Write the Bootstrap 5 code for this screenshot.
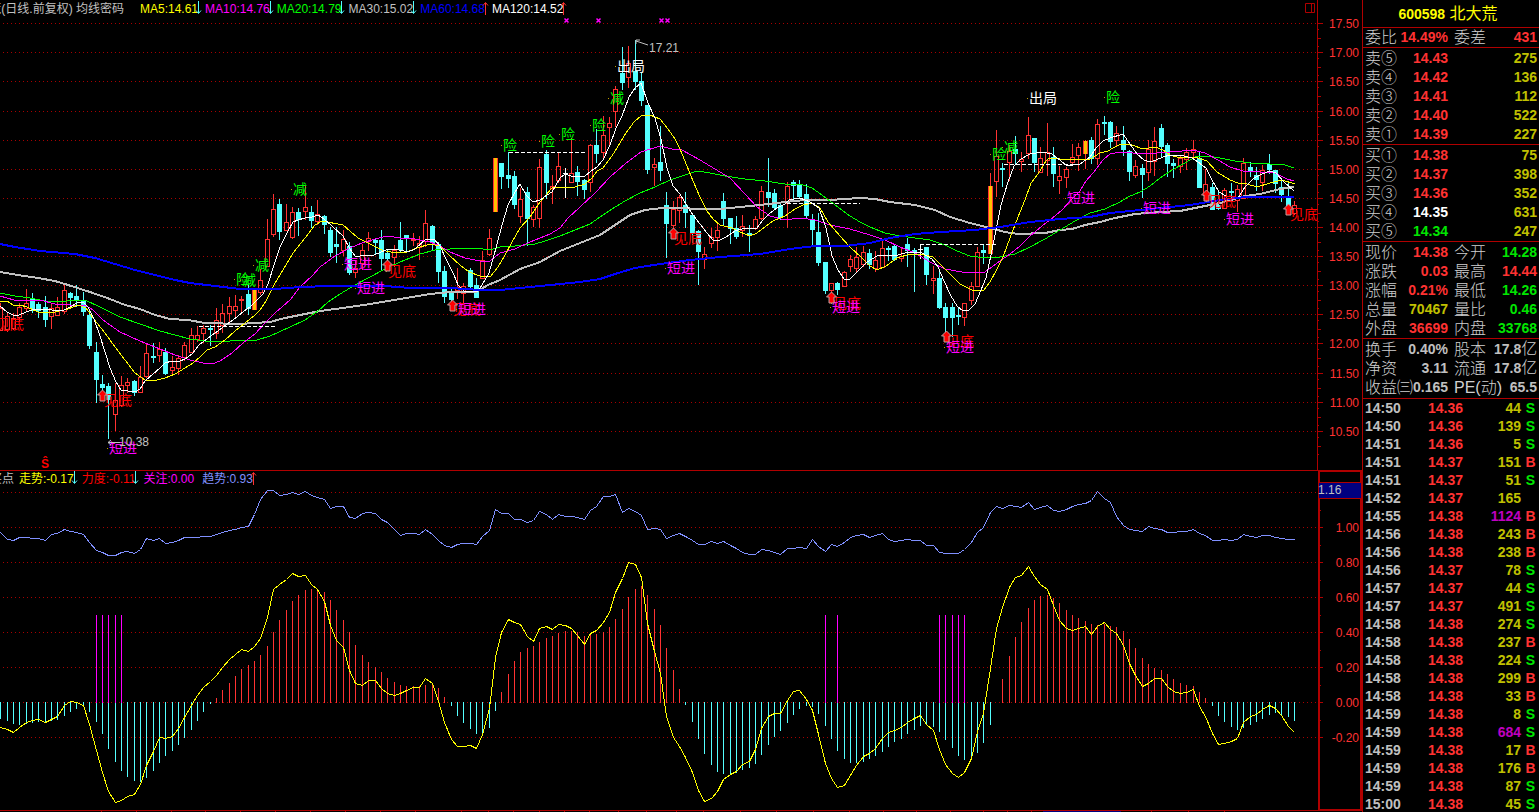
<!DOCTYPE html>
<html lang="zh-CN">
<head>
<meta charset="utf-8">
<meta name="viewport" content="width=device-width, initial-scale=1">
<title>600598 北大荒</title>
<link href="https://cdn.jsdelivr.net/npm/bootstrap@5.3.0/dist/css/bootstrap.min.css" rel="stylesheet">
<style>
:root { --line:#b00000; --up:#ff3232; --down:#00e600; --cyan:#54ffff; --grey:#c0c0c0; --vol:#c0c000; }
body { background:#000; color:var(--grey); font-family:"Liberation Sans","Noto Sans CJK SC",sans-serif; font-size:12px; }
.charts { min-width:0; }
.charts svg.plot { display:block; width:100%; height:auto; }
.legend { top:1px; left:0; height:16px; line-height:16px; white-space:nowrap; }
.clip-title { overflow:hidden; }
.main-title { width:124px; margin-right:8px; }
.sub-title { width:14px; margin-right:-3px; }
.val svg { position:absolute; right:-4px; top:0; }
.c-y { color:#ff0; } .c-m { color:#f0f; } .c-g { color:#0f0; } .c-b { color:#00f; } .c-w { color:#fff; } .c-r { color:#f00; } .c-p { color:#8090ff; }
.side { width:177px; border-left:1px solid var(--line); overflow:hidden; }
.side h1 { height:28px; line-height:28px; margin:0; padding-right:6px; font-size:16px; font-weight:400; color:#ff0; border-bottom:1px solid var(--line); }
.side h1 b { font-size:14px; }
.sect { border-bottom:1px solid var(--line); padding:1px 1px 0; }
.sect.tight { padding-top:0; }
.sect.basic { padding-bottom:1px; }
.side table { width:100%; table-layout:fixed; border-collapse:collapse; font-size:14px; font-weight:700; white-space:nowrap; }
.side th { font-size:16px; font-weight:300; padding:0 0 0 1px; color:#d0d0d0; }
.side td + th { padding-left:5px; }
.side td { padding:0 1px 0 0; text-align:right; }
.quote tr { height:19px; line-height:19px; }
.ticks tr { height:18px; line-height:18px; }
.ticks td:first-child { text-align:left; padding-left:2px; }
.ticks td:last-child { text-align:center; padding:0; }
.u { color:var(--up); } .d { color:var(--down); } .v { color:var(--vol); } .big { color:#c000c0; }
.han { font-size:16px; font-weight:300; line-height:1px; color:#d0d0d0; }
.plot text { font-family:"Liberation Sans","Noto Sans CJK SC",sans-serif; font-size:12px; }
.plot .sig { font-size:14px; font-weight:400; }
</style>
</head>
<body>
<div class="d-flex vh-100 overflow-hidden">
  <main class="charts flex-fill">
    <section class="position-relative">
      <div class="legend position-absolute d-flex" id="lg1"></div>
      <svg class="plot" id="price" viewBox="0 0 1362 470" role="img" aria-label="日线"></svg>
    </section>
    <section class="position-relative">
      <div class="legend position-absolute d-flex" id="lg2"></div>
      <svg class="plot" id="ind" viewBox="0 470 1362 342" role="img" aria-label="走势"></svg>
    </section>
  </main>
  <aside class="side flex-shrink-0">
    <h1 class="text-center"><b>600598</b> 北大荒</h1>
    <div class="sect tight"><table class="quote" data-t="head"></table></div>
    <div class="sect"><table class="quote" data-t="ask"></table></div>
    <div class="sect"><table class="quote" data-t="bid"></table></div>
    <div class="sect"><table class="quote" data-t="info"></table></div>
    <div class="sect basic"><table class="quote" data-t="base"></table></div>
    <table class="ticks" id="ticks"><colgroup><col style="width:48px"><col style="width:53px"><col style="width:58px"><col></colgroup></table>
  </aside>
</div>
<script>
// ---------- legends ----------
const arrow = up => up
  ? '<svg width="7" height="16"><path d="M3.5 14V2M1 4.500L3.500 1.500L6 4.500" fill="none" stroke="#ff3232"/></svg>'
  : '<svg width="7" height="16"><path d="M3.5 0V12M1 9.500L3.500 12.500L6 9.500" fill="none" stroke="#54ffff"/></svg>';
const legend = (id, cls, title, items) => {
  document.getElementById(id).innerHTML =
    `<div class="clip-title ${cls} d-flex justify-content-end flex-shrink-0"><span>${title}</span></div><div class="d-flex ms-2" style="gap:${id === 'lg1' ? 7 : 8}px">` +
    items.map(([t, c, a]) => `<span class="val position-relative ${c}">${t}${a === undefined ? '' : arrow(a)}</span>`).join('') + '</div>';
};
legend('lg1', 'main-title', '北大荒(日线.前复权) 均线密码', [['MA5:14.61','c-y',0],['MA10:14.76','c-m',0],['MA20:14.79','c-g',0],['MA30:15.02','',0],['MA60:14.68','c-b',1],['MA120:14.52','c-w',1]]);
legend('lg2', 'sub-title', '买点', [['走势:-0.17','c-y',0],['力度:-0.11','c-r',0],['关注:0.00','c-m'],['趋势:0.93','c-p',1]]);

// ---------- candles: high, body top, body bottom, low, kind ----------
const K = `303 308 330 330 r;312 316 329 332 r;313 318 328 330 r;303 307 317 322 r;289 303 308 312 r;293 299 309 313 c;302 304 311 318 c;296 307 320 327 c;303 308 316 329 r;297 307 315 316 r;
285 290 311 314 r;292 293 298 305 c;285 296 301 307 c;292 301 312 316 c;311 315 346 349 c;342 352 380 403 c;375 384 388 394 c;383 386 400 439 c;383 400 414 431 r;376 385 405 407 r;
378 382 385 393 r;380 381 393 396 c;366 377 392 393 r;344 353 376 378 r;343 356 358 363 c;342 349 355 362 r;348 352 374 375 c;356 367 370 375 r;355 358 368 375 r;342 345 357 361 r;
328 335 352 353 r;326 335 339 342 r;325 328 333 343 r;325 328 330 346 c;308 320 333 339 r;304 313 325 333 r;297 306 313 322 r;295 306 310 319 r;296 299 300 313 r;285 294 309 315 c;
290 290 310 310 g;269 280 292 295 r;219 239 266 267 r;194 209 234 237 r;199 204 232 240 c;204 222 230 230 r;207 212 237 239 r;208 212 220 236 c;185 207 211 220 r;206 212 221 228 c;
200 214 221 225 r;215 216 225 234 c;227 230 253 257 c;227 244 247 263 c;230 239 250 256 r;242 246 273 275 c;260 268 272 278 r;244 250 263 270 r;232 238 241 251 r;238 240 243 255 c;
230 240 259 271 c;250 253 259 263 c;245 250 257 267 r;222 240 250 252 c;235 235 239 251 c;233 239 240 246 r;236 243 247 260 r;210 223 241 247 r;225 226 243 250 c;242 244 272 283 c;
266 271 297 303 c;288 292 300 303 c;268 287 290 299 r;283 286 293 304 r;268 270 287 290 c;278 285 298 298 c;251 260 278 279 r;229 238 254 256 r;158 158 212 212 g;163 163 177 189 c;
152 175 179 188 c;171 176 205 209 c;188 199 216 223 r;187 192 219 246 c;205 207 219 227 r;159 167 218 228 r;150 154 183 199 c;175 186 188 204 r;153 166 180 183 r;168 173 174 198 w;
138 173 182 183 r;166 172 182 196 c;179 180 190 199 c;144 145 182 192 r;129 145 154 163 c;116 135 152 160 r;117 123 127 146 r;86 89 111 127 r;47 73 83 90 c;46 63 77 88 r;
40 71 82 90 c;72 81 101 106 c;105 105 170 174 c;158 164 167 186 r;126 162 171 181 c;192 205 224 258 c;201 209 225 230 r;195 197 210 223 r;192 205 213 228 c;213 215 233 243 c;
230 231 252 285 c;247 254 259 269 r;228 237 243 248 r;222 230 237 251 r;193 201 219 226 c;218 218 229 244 c;216 228 237 239 c;215 226 230 237 r;225 233 235 252 c;216 219 228 230 r;
186 191 218 220 r;158 192 198 207 c;189 193 208 210 c;203 205 218 220 c;182 186 203 228 r;180 182 186 202 c;180 184 197 198 c;184 194 216 219 c;214 219 230 246 c;213 232 263 266 c;
262 262 291 294 c;283 283 290 296 r;282 283 290 295 c;271 272 286 287 r;255 259 266 272 r;247 257 268 272 r;246 252 264 267 r;249 253 265 269 c;251 260 268 272 r;241 248 267 268 r;
246 248 250 261 c;245 246 260 261 c;247 256 258 262 r;238 244 251 267 c;248 250 252 292 c;244 249 250 259 w;247 247 275 285 c;266 278 280 294 r;272 278 308 309 c;303 307 318 335 c;
303 307 318 337 c;308 315 317 325 c;303 303 317 326 r;282 286 300 305 r;247 252 286 286 r;245 250 253 264 c;173 186 254 254 g;130 156 181 197 r;163 168 170 187 c;145 151 162 181 r;
136 149 154 164 c;152 159 161 172 r;117 135 153 159 r;138 138 163 172 c;147 158 172 173 r;123 152 160 176 r;147 157 174 187 c;166 176 180 194 r;167 169 177 188 r;144 157 162 165 r;
143 147 155 171 r;140 141 154 169 g;137 140 159 164 c;119 124 158 165 r;116 122 124 135 c;121 122 142 148 c;126 133 140 147 r;126 140 150 156 c;150 151 172 181 c;160 166 175 178 r;
164 168 175 198 c;140 149 172 181 r;127 141 161 176 r;124 128 147 157 c;143 145 164 177 c;159 163 166 178 c;155 158 166 173 r;148 152 159 170 r;140 149 152 160 r;151 158 188 188 c;
169 184 195 202 r;183 187 210 210 c;192 205 209 210 c;188 190 208 209 r;183 191 193 202 c;185 189 200 212 r;158 163 198 199 r;162 167 171 177 c;167 175 180 191 c;165 170 182 191 r;
154 164 170 174 c;170 170 184 193 c;180 187 195 202 c;183 198 206 213 c;201 205 213 215 r`.split(';').map(s => s.trim().split(' '));
const X = i => Math.floor(0.9 + 6.341 * i);

const RED = '#ff3232', CY = '#54ffff', LN = '#b00000';
const line = (x1, y1, x2, y2, c, extra = '') => `<line x1="${x1}" y1="${y1}" x2="${x2}" y2="${y2}" stroke="${c}" shape-rendering="crispEdges" ${extra}/>`;
const rect = (x, y, w, h, f, extra = '') => `<rect x="${x}" y="${y}" width="${w}" height="${h}" fill="${f}" shape-rendering="crispEdges" ${extra}/>`;
const poly = (p, c, w = 1) => `<polyline points="${p}" fill="none" stroke="${c}" stroke-width="${w}" stroke-linejoin="round" shape-rendering="crispEdges"/>`;
const txt = (x, y, t, c, extra = '') => `<text x="${x}" y="${y}" fill="${c}" ${extra}>${t}</text>`;
const grid = y => line(3, y + .5, 1317, y + .5, '#a80000', 'stroke-dasharray="1 3"');

let s = '';
const gy = [23,52,81,111,140,169,198,227,256,285,314,343,373,402,431];
gy.forEach((y, n) => {
  s += grid(y) + line(1317, y + .5, 1323, y + .5, LN) + line(1317, y + 6.5, 1319, y + 6.5, LN) + line(1317, y + 15.5, 1321, y + 15.5, LN) + line(1317, y + 23.5, 1319, y + 23.5, LN);
  s += txt(1359, y + 5, (17.5 - n * .5).toFixed(2), RED, 'text-anchor="end"');
});
s += line(1317.5, 0, 1317.5, 470, LN);
K.forEach(([h, t, b, l, k], i) => {
  [h, t, b, l] = [+h, +t, +b, +l];
  const x = X(i);
  if (k === 'c') s += rect(x, h, 1, l - h, CY) + rect(x - 2, t, 5, Math.max(b - t, 1), CY);
  else if (k === 'w') s += rect(x, h, 1, l - h, '#fff') + rect(x - 2, t, 5, 1, '#fff');
  else if (k === 'g') s += rect(x, h, 1, l - h, RED) + rect(x - 2, t, 5, b - t, RED) + rect(x - 1, t, 3, b - t, '#ffc000');
  else s += rect(x, h, 1, t - h, RED) + rect(x, b, 1, l - b, RED) + rect(x - 1.5, t + .5, 4, Math.max(b - t, 1), 'none', `stroke="${RED}"`);
});
s += poly('0,272 18,275 38,278 55,281 68,285 90,292 110,299 125,305 140,309 155,315 170,319 188,320 205,323 240,324 270,322 285,318 305,314 320,311 350,307 370,304 400,299 430,294 450,292 476,292 488,285 500,280 520,269 540,262 560,251 580,243 600,235 615,225 630,215 645,210 662,208 680,208 700,209 720,209 740,207 760,205 785,202 805,200 830,200 860,198 875,199 890,202 915,205 935,210 950,217 970,223 990,228 1005,232 1018,234 1045,233 1060,230 1072,229 1085,225 1100,222 1115,218 1135,214 1160,212 1180,211 1200,207 1220,203 1245,196 1260,194 1280,189 1294,187', '#c0c0c0', 2);
s += poly('0,293 15,296 30,298 45,301 62,302 72,300 85,300 100,307 120,317 140,324 160,331 175,335 190,339 205,341 230,341 257,340 270,336 290,327 305,320 318,311 328,302 340,294 355,285 370,277 385,269 400,262 420,254 435,250 450,249 475,248 490,250 500,247 515,246 535,244 545,241 560,236 575,230 590,224 600,217 612,209 625,201 640,193 655,187 670,180 685,175 697,171 710,173 725,176 745,179 765,181 785,184 800,184 812,188 822,195 835,205 850,216 860,222 870,227 885,233 900,236 915,238 930,240 945,245 957,251 970,256 985,258 1000,257 1015,254 1030,247 1045,239 1060,230 1075,221 1090,213 1105,209 1120,202 1128,197 1140,192 1150,186 1160,178 1172,170 1185,163 1195,157 1208,156 1220,158 1235,161 1250,163 1270,164 1285,165 1294,168', '#0f0');
s += poly('0,296 14,300 40,300 55,304 70,305 85,305 93,310 103,320 120,332 140,341 160,349 175,355 190,360 203,363 212,364 220,361 232,353 243,343 255,334 265,323 275,313 290,300 300,287 313,275 320,267 335,256 350,248 362,243 375,239 387,236 400,238 415,239 430,242 440,246 450,252 465,258 480,261 490,261 500,253 515,249 530,242 540,238 550,234 560,228 568,218 580,207 595,193 610,177 625,164 641,152 660,146 672,149 682,150 700,160 715,169 730,178 745,194 757,207 770,216 785,220 800,218 815,220 830,225 850,229 870,235 885,240 900,247 915,253 930,262 945,269 962,272 985,272 1000,261 1010,254 1020,246 1030,236 1042,226 1050,220 1062,210 1070,201 1080,191 1086,181 1093,173 1103,160 1110,154 1120,152 1145,154 1170,152 1182,151 1193,150 1205,153 1218,160 1230,167 1243,171 1260,172 1275,173 1287,179 1294,181', '#f0f');
s += poly('0,301 7,301 13,305 20,305 27,307 38,312 55,312 68,309 78,305 86,308 93,318 105,333 115,347 125,360 135,373 145,380 153,381 165,378 175,374 185,368 193,363 200,357 207,350 215,347 225,340 235,331 245,323 255,315 260,310 266,301 274,285 283,270 293,253 305,238 315,225 322,221 343,225 350,231 358,238 372,245 382,250 395,253 407,252 417,248 430,244 440,246 450,256 460,265 469,272 480,276 490,277 498,267 505,255 512,242 520,228 530,217 540,202 552,188 575,187 585,184 592,178 597,171 603,168 612,156 620,143 626,133 634,122 641,116 650,115 660,119 668,129 675,139 680,149 687,166 693,181 700,197 707,211 713,219 720,225 732,228 740,232 750,236 757,233 765,227 773,221 785,216 795,209 803,205 812,203 820,208 828,222 840,236 850,247 862,258 870,266 877,270 886,266 897,258 910,254 920,254 933,257 940,264 950,274 960,284 972,290 984,290 990,282 997,269 1003,257 1010,238 1018,217 1025,200 1031,183 1038,174 1046,161 1049,158 1060,159 1090,159 1100,153 1108,151 1113,148 1121,144 1132,145 1143,149 1155,147 1163,150 1170,155 1180,158 1195,157 1207,161 1217,172 1230,180 1238,183 1247,184 1257,187 1270,183 1282,180 1295,184', '#ff0');
s += poly('0,306 7,312 13,315 19,315 26,312 32,310 45,309 58,311 64,310 70,307 77,303 83,302 88,307 94,319 99,333 105,352 110,368 116,382 121,390 128,391 135,392 140,389 145,381 153,374 160,368 165,363 172,361 180,361 185,359 192,354 199,345 207,339 215,333 222,328 230,322 237,317 244,311 250,307 257,300 263,294 268,284 274,265 280,247 287,233 293,222 298,220 305,218 312,217 318,215 324,219 332,226 343,236 350,249 356,257 364,255 374,255 386,250 395,249 408,252 415,249 426,239 434,239 440,246 447,261 454,275 458,285 464,291 477,292 482,285 489,273 496,248 502,225 508,205 515,192 520,184 526,195 533,202 540,200 547,195 552,192 560,178 565,174 571,176 585,176 591,171 597,167 603,160 610,145 616,128 622,116 629,97 635,88 641,83 648,103 655,118 661,139 667,168 673,186 680,194 687,206 693,215 700,224 707,233 713,240 718,241 726,237 735,231 745,228 757,228 763,220 770,213 777,208 785,204 789,200 800,198 810,202 819,208 826,228 832,256 838,270 844,279 850,279 858,271 867,262 877,256 890,255 898,255 908,252 922,253 932,259 938,267 944,281 951,296 957,306 963,311 969,310 975,304 981,290 986,278 991,255 996,230 1001,205 1008,182 1014,166 1021,159 1030,154 1042,152 1052,154 1061,161 1067,166 1080,164 1090,157 1096,148 1103,141 1110,138 1123,134 1130,144 1137,154 1144,160 1150,162 1156,160 1163,157 1170,155 1180,155 1192,158 1198,162 1206,168 1212,180 1219,192 1226,196 1238,198 1245,187 1254,178 1262,174 1270,171 1276,173 1284,182 1294,191', '#fff');
s += poly('0,244 15,247 40,251 75,254 95,258 115,264 135,270 155,275 175,280 190,283 215,286 240,289 275,289 300,287 330,286 370,286 385,286 410,288 430,288 450,288 480,290 500,290 530,287 560,284 580,282 600,279 615,274 635,268 660,264 690,260 720,257 760,254 790,249 815,246 845,246 870,243 890,238 915,234 940,232 975,230 1000,227 1030,222 1060,219 1090,217 1110,213 1130,211 1160,208 1190,205 1220,200 1245,197 1294,197', '#00f', 2);
[[199,276,326],[509,586,152],[787,860,203],[920,998,244],[1004,1080,164]].forEach(([a, b, y]) => s += line(a, y + .5, b, y + .5, '#fff', 'stroke-dasharray="4 2"'));

// signal texts: left, middle, text
const G = '#0f0', M = '#f0f', R = '#f00', W = '#fff';
[[-4,324,'见底',R],[104,400,'见底',R],[388,271,'见底',R],[453,309,'见底',R],[674,238,'见底',R],[833,303,'见底',R],[946,341,'见底',R],[1208,201,'见底',R],[1290,214,'见底',R],
 [236,279,'险',G],[242,280,'减',G],[255,265,'减',G],[293,189,'减',G],[503,145,'险',G],[541,141,'险',G],[561,134,'险',G],[592,125,'险',G],[610,98,'减',G],[992,154,'险',G],[1004,147,'减',G],[1106,97,'险',G],
 [617,66,'出局',W],[1029,98,'出局',W],
 [109,448,'短进',M],[344,264,'短进',M],[357,288,'短进',M],[458,309,'短进',M],[667,268,'短进',M],[832,307,'短进',M],[946,347,'短进',M],[1067,198,'短进',M],[1143,208,'短进',M],[1226,219,'短进',M]
].forEach(([x, y, t, c]) => s += txt(x, y + 5, t, c, 'class="sig"') + rect(x - 2, y, 1, 1, '#c0a000'));
[[102,390],[387,260],[452,300],[673,228],[831,292],[946,331],[1206,190],[1288,204]].forEach(([x, y]) =>
  s += `<path d="M${x + .5} ${y}l5 5h-2.500v6h-5v-6h-2.500z" fill="#f00" stroke="#c0a0a0"/>`);
s += '<path d="M648 45L636 41M636 44V40H640" fill="none" stroke="#c0c0c0"/>' + txt(649, 52, '17.21', '#c0c0c0');
s += '<path d="M120 442.500H108M111 440L108 442.500L111 445" fill="none" stroke="#c0c0c0"/>' + txt(119, 446, '10.38', '#c0c0c0');
[566,598,661,667].forEach(x => s += `<path d="M${x - 1.5} 18.500l4 4m0 -4l-4 4" stroke="#f0f" stroke-width="1.500"/>`);
s += `<path d="M1305.500 3.500h9v9h-9zM1311.500 3.500v9" fill="none" stroke="${LN}"/>`;
s += txt(41, 468, 'Ŝ', '#f00', 'font-weight="700"');
document.getElementById('price').innerHTML = s;

// ---------- indicator ----------
const Y = '727,729,732,727,722,720,719,722,719,716,705,701,702,705,724,750,772,791,802,800,796,794,784,765,751,737,738,736,728,717,705,695,687,681,675,667,659,654,649,651,646,638,617,589,584,579,573,576,575,584,589,601,625,640,647,670,683,685,680,680,688,693,695,693,690,687,687,678,683,701,722,739,746,746,745,748,734,708,657,632,619,622,624,636,641,628,626,629,624,625,628,635,644,633,630,622,612,592,578,562,564,577,623,651,673,716,737,746,757,772,790,801,798,791,779,774,771,764,761,749,728,716,713,713,700,691,690,699,710,734,763,778,787,785,775,765,756,753,748,738,732,730,727,722,718,715,724,730,749,764,773,777,772,758,731,713,668,628,607,587,577,575,566,576,584,589,605,620,628,630,628,626,634,626,622,629,633,645,663,675,686,683,678,678,686,691,693,692,689,706,716,733,744,743,741,738,722,716,714,709,705,708,715,726,732'.split(',');
const T = '532,539,540,537,537,538,538,540,534,533,529,531,532,534,542,550,552,555,555,552,551,553,549,538,540,538,543,542,540,537,537,537,536,536,534,532,530,529,527,526,514,499,490,490,495,494,492,494,491,495,497,499,508,506,506,517,518,513,512,513,519,522,529,535,533,533,534,529,534,540,545,547,544,543,543,544,536,530,509,513,513,519,519,522,520,511,514,519,514,516,516,517,519,510,506,496,496,494,512,508,511,515,529,528,529,538,535,533,536,540,544,544,541,543,541,545,548,552,554,554,549,550,552,554,548,548,547,548,539,546,551,544,546,542,537,535,534,537,535,533,539,541,540,539,540,540,545,545,552,553,553,553,549,542,532,527,512,506,508,505,506,507,502,509,507,505,510,511,509,506,504,503,500,491,498,502,516,525,529,530,531,526,528,529,532,532,531,531,529,533,535,540,540,539,540,539,534,536,537,535,535,537,538,539,539'.split(',');
const B = '719,721,724,725,724,723,722,722,721,720,716,712,709,705,712,722,734,749,762,771,777,781,782,778,771,763,756,751,745,738,730,721,712,704,698,690,683,676,669,665,661,655,646,632,620,610,601,595,590,589,589,592,600,610,620,632,645,655,662,667,672,678,682,685,686,686,686,685,684,688,697,706,716,723,729,734,733,728,711,692,674,661,652,648,646,642,638,636,633,631,631,632,636,635,634,632,627,619,609,597,589,586,595,609,625,648,670,689,705,722,739,754,765,772,774,774,773,770,768,764,755,745,737,731,723,715,709,706,707,714,726,739,751,759,763,763,762,759,756,752,747,742,739,734,730,726,725,727,732,740,748,756,760,760,753,743,725,702,679,656,637,622,608,600,596,595,598,603,610,615,618,621,624,625,624,626,627,631,639,648,658,664,668,670,674,679,683,685,686,692,698,706,716,722,727,730,728,725,722,719,715,713,715,717,721'.split(',');
s = '';
[492,527,562,597,632,667,702,737].forEach((y, n) => {
  s += grid(y);
  if (n) s += line(1318, y + .5, 1323, y + .5, LN) + line(1318, y - 16.5, 1321, y - 16.5, LN) + txt(1359, y + 5, ((12 - n * 2) / 10).toFixed(2), RED, 'text-anchor="end"');
});
B.forEach((b, i) => s += b < 702 ? rect(X(i), b, 1, 703 - b, RED) : rect(X(i), 702, 1, b - 702, CY));
[15,16,17,18,19,130,132,148,149,150,151,152].forEach(i => s += rect(X(i), 615, 1, 88, '#f0f'));
s += poly(T.map((y, i) => X(i) + '.5,' + y + '.5').join(' '), '#8090ff') + poly(Y.map((y, i) => X(i) + '.5,' + y + '.5').join(' '), '#ff0');
s += rect(0, 470, 1362, 1, LN) + rect(0, 810, 1362, 1, LN);
s += rect(1318, 470, 2, 341, LN) + rect(1360, 470, 2, 341, LN) + rect(1318, 470, 44, 2, LN) + rect(1318, 809, 44, 2, LN);
s += rect(1319, 483, 42, 15, '#000080') + rect(1319, 482, 42, 1, LN) + rect(1319, 498, 42, 1, LN) + txt(1318, 494, '1.16', '#c0c0c0');
s += rect(1043, 811, 78, 1, '#000080');
[101,136,171,205,240,275,310,345,380,415,461,488,513,539,564,589,618,646,676,703,740,776,813,849,883,916,950,983,1007,1031,1151,1188,1224].forEach(x => s += rect(x, 811, 1, 1, LN));
document.getElementById('ind').innerHTML = s;

// ---------- quote panel: label, value, class, label, value, class ----------
const cols = '<colgroup><col style="width:36px"><col style="width:49px"><col style="width:45px"><col></colgroup>';
const Q = {
  head: [['委比','14.49%','u','委差','431','u']],
  ask: [['卖⑤','14.43','u','','275','v'],['卖④','14.42','u','','136','v'],['卖③','14.41','u','','112','v'],['卖②','14.40','u','','522','v'],['卖①','14.39','u','','227','v']],
  bid: [['买①','14.38','u','','75','v'],['买②','14.37','u','','398','v'],['买③','14.36','u','','352','v'],['买④','14.35','c-w','','631','v'],['买⑤','14.34','d','','247','v']],
  info: [['现价','14.38','u','今开','14.28','d'],['涨跌','0.03','u','最高','14.44','u'],['涨幅','0.21%','u','最低','14.26','d'],['总量','70467','v','量比','0.46','d'],['外盘','36699','u','内盘','33768','d']],
  base: [['换手','0.40%','','股本','17.8<span class="han">亿</span>',''],['净资','3.11','','流通','17.8<span class="han">亿</span>',''],['收益㈢','0.165','','PE(动)','65.5','']]
};
document.querySelectorAll('[data-t]').forEach(t => t.innerHTML = cols + '<tbody>' + Q[t.dataset.t].map(r =>
  `<tr><th scope="row">${r[0]}</th><td class="${r[2]}">${r[1]}</td>${r[3] ? `<th scope="row">${r[3]}</th>` : '<td></td>'}<td class="${r[5]}">${r[4]}</td></tr>`).join('') + '</tbody>');

const ticks = `14:50 36 44 S,14:50 36 139 S,14:51 36 5 S,14:51 37 151 B,14:51 37 51 S,14:52 37 165 -,14:55 38 1124 B,14:56 38 243 B,14:56 38 238 B,14:56 37 78 S,14:57 37 44 S,14:57 37 491 S,14:58 38 274 S,14:58 38 237 B,14:58 38 224 S,14:58 38 299 B,14:58 38 33 B,14:59 38 8 S,14:59 38 684 S,14:59 38 17 B,14:59 38 176 B,14:59 38 87 S,15:00 38 45 S`;
document.getElementById('ticks').insertAdjacentHTML('beforeend', '<tbody>' + ticks.split(',').map(r => {
  const [t, p, v, f] = r.split(' ');
  return `<tr><td>${t}</td><td class="u">14.${p}</td><td class="${v > 500 ? 'big' : 'v'}">${v}</td><td class="${f === 'B' ? 'u' : 'd'}">${f === '-' ? '' : f}</td></tr>`;
}).join('') + '</tbody>');
</script>
<script src="https://cdn.jsdelivr.net/npm/bootstrap@5.3.0/dist/js/bootstrap.bundle.min.js"></script>
</body>
</html>
